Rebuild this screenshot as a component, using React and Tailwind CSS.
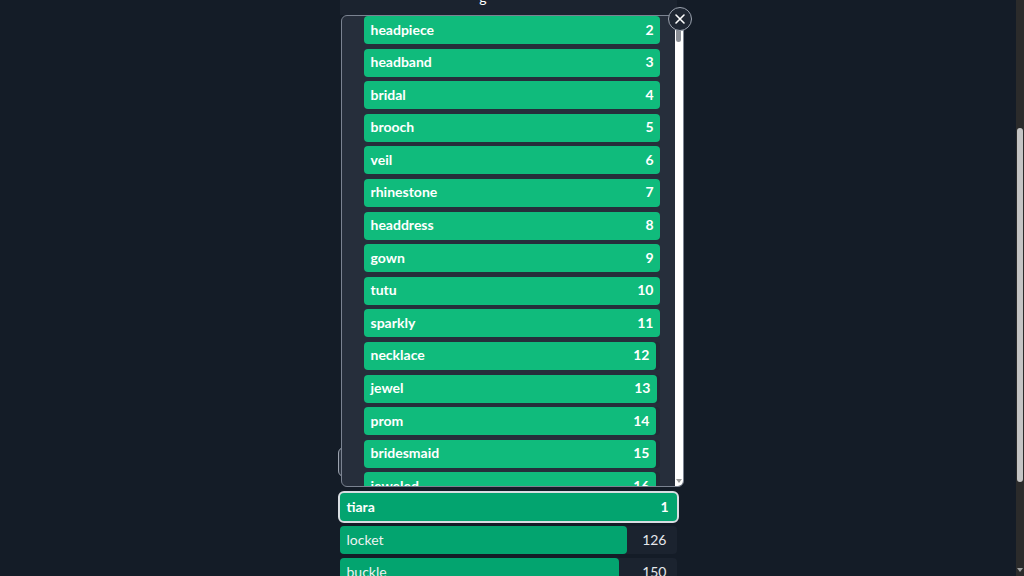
import React from 'react';

const tags = [
  { name: 'headpiece', n: 2, w: 296 },
  { name: 'headband', n: 3, w: 296 },
  { name: 'bridal', n: 4, w: 296 },
  { name: 'brooch', n: 5, w: 296 },
  { name: 'veil', n: 6, w: 296 },
  { name: 'rhinestone', n: 7, w: 296 },
  { name: 'headdress', n: 8, w: 296 },
  { name: 'gown', n: 9, w: 296 },
  { name: 'tutu', n: 10, w: 296 },
  { name: 'sparkly', n: 11, w: 296 },
  { name: 'necklace', n: 12, w: 292 },
  { name: 'jewel', n: 13, w: 293 },
  { name: 'prom', n: 14, w: 292 },
  { name: 'bridesmaid', n: 15, w: 292 },
  { name: 'jeweled', n: 16, w: 292 },
];

const TagRow = ({ name, n, w }) => (
  <div className="h-[28px] mb-[4.6px] w-[296px] bg-[#222a36] rounded-[4px] shrink-0">
    <div
      className="h-full bg-[#10bb7c] rounded-[4px] flex items-center justify-between pl-[7px] pr-[6px] pb-[2px] text-white font-bold text-[14px]"
      style={{ width: w }}
    >
      <span>{name}</span>
      <span>{n}</span>
    </div>
  </div>
);

const App = () => {
  return (
    <div
      className="w-full h-[576px] flex overflow-hidden bg-[#141c27]"
      style={{ fontFamily: 'Lato, "Noto Sans", sans-serif' }}
    >
      <div className="flex-1 flex justify-center items-start">
        <div className="relative w-[337px] flex flex-col">
          <div className="h-[15px] shrink-0 bg-[#1b232f] overflow-hidden flex justify-center">
            <span className="text-white text-[14px] leading-none -mt-[9px] ml-[-50px]">g</span>
          </div>
          <div className="h-[432px] shrink-0" />
          <div className="h-[30px] shrink-0 -ml-[2px] w-[20px] rounded-[6px] border border-[#9ca3af] bg-[#2b3340]" />
          <div className="h-[14px] shrink-0" />

          <div className="-mx-[2px] h-[32px] shrink-0 rounded-[6px] border-2 border-[#d9dde2] bg-[#03a46f] flex items-center justify-between pl-[7px] pr-[8px] pb-[1px] text-white font-bold text-[14px]">
            <span>tiara</span>
            <span>1</span>
          </div>
          <div className="mt-[3px] h-[28px] shrink-0 bg-[#1b232f] rounded-[4px] flex items-center">
            <div className="h-full w-[287px] bg-[#03a46f] rounded-[4px] flex items-center pl-[7px] pb-[1px] text-[#eef2f1] text-[14px]">
              locket
            </div>
            <span className="ml-auto pr-[10px] pb-[1px] text-[#e5e7eb] text-[14px]">126</span>
          </div>
          <div className="mt-[4px] h-[28px] shrink-0 bg-[#1b232f] rounded-[4px] flex items-center">
            <div className="h-full w-[279px] bg-[#03a46f] rounded-[4px] flex items-center pl-[7px] pb-[1px] text-[#eef2f1] text-[14px]">
              buckle
            </div>
            <span className="ml-auto pr-[10px] pb-[1px] text-[#e5e7eb] text-[14px]">150</span>
          </div>

          <div className="absolute top-[15px] left-[1px] w-[343px] h-[472px] rounded-[6px] border border-[#7b8391] bg-[#262e3b] flex overflow-hidden">
            <div className="flex-1 flex flex-col pl-[22px] overflow-hidden">
              {tags.map((t) => (
                <TagRow key={t.name} {...t} />
              ))}
            </div>
            <div className="w-[8px] bg-white flex flex-col items-center pt-[12px]">
              <div className="w-[5px] h-[14px] rounded-full bg-[#8b8f96]" />
              <div className="flex-1" />
              <svg width="6" height="5" viewBox="0 0 6 5" className="mb-[2px]">
                <path d="M0 0 L6 0 L3 4 Z" fill="#9a9a9a" />
              </svg>
            </div>
          </div>

          <button className="absolute top-[7px] left-[328px] w-[24px] h-[24px] rounded-full border border-[#9ca3af] bg-[#1f2733] flex items-center justify-center">
            <svg width="12" height="12" viewBox="0 0 12 12">
              <path d="M2 2 L10 10 M10 2 L2 10" stroke="white" strokeWidth="1.6" strokeLinecap="round" />
            </svg>
          </button>
        </div>
      </div>
      <div className="w-[8px] bg-[#2b2b2b] flex flex-col items-center">
        <div className="h-[128px]" />
        <div className="w-[6px] h-[354px] rounded-full bg-[#c4c4c4]" />
        <div className="flex-1" />
        <svg width="6" height="5" viewBox="0 0 6 5" className="mb-[3px]">
          <path d="M0 0 L6 0 L3 4 Z" fill="#a0a0a0" />
        </svg>
      </div>
    </div>
  );
};

export default App;
